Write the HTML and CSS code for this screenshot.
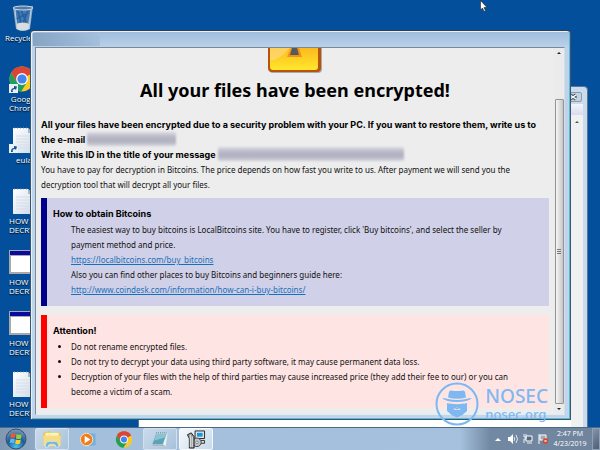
FILE: index.html
```
<!DOCTYPE html>
<html lang="en">
<head>
    <meta charset="UTF-8">
    <meta name="viewport" content="width=device-width, initial-scale=1.0">
    <title>Desktop</title>
    <link rel="stylesheet" href="styles.css">
</head>
<body>
    <!-- shared icons -->
    <svg class="defs" width="0" height="0" aria-hidden="true">
        <defs>
            <linearGradient id="paper" x1="0" y1="0" x2="1" y2="1">
                <stop offset="0" stop-color="#ffffff"/>
                <stop offset="1" stop-color="#cfdbe8"/>
            </linearGradient>
            <symbol id="chrome" viewBox="0 0 48 48">
                <circle cx="24" cy="24" r="23" fill="#fbc926"/>
                <path d="M24 24 4 12.5A23 23 0 0 1 44 12.500Z" fill="#dc4437"/>
                <path d="M24 13h19.500a23 23 0 0 0-39.500-.5L14.500 30Z" fill="#dc4437"/>
                <path d="M4 12.500a23 23 0 0 0 18.500 34.400L33 30 24 34.500 14.500 29.500Z" fill="#1fa05c"/>
                <circle cx="24" cy="24" r="11" fill="#f4f6f8"/>
                <circle cx="24" cy="24" r="8.500" fill="#4285f0"/>
            </symbol>
            <symbol id="doc" viewBox="0 0 20 26">
                <path d="M0 1h15l5 5v20H0Z" fill="url(#paper)"/>
                <path d="M15 1v5h5Z" fill="#a9b8c6"/>
                <path d="M1 1h13" stroke="#7f93a8" stroke-dasharray="1 2"/>
                <path d="M3 9h14M3 12h14M3 15h14M3 18h14M3 21h14" stroke="#d5dee8"/>
            </symbol>
            <symbol id="app" viewBox="0 0 28 24">
                <path d="M0 0h28v24H0Z" fill="#a9a9a9"/>
                <path d="M1 1h26v4H1Z" fill="#0a0aa0"/>
                <path d="M2 6h24v16H2Z" fill="#fff"/>
            </symbol>
            <symbol id="shortcut" viewBox="0 0 9 9">
                <path d="M0 0h9v9H0Z" fill="#e9f1f8"/>
                <path d="M2 8C2 5 3 4 5 4V2l3 .5L7 6 6 5C4 5 3 6 4 8Z" fill="#17508f"/>
            </symbol>
        </defs>
    </svg>

    <main class="desktop">
        <ul class="icons">
            <li class="shortcut">
                <svg class="pic" viewBox="0 0 26 27">
                    <path d="M4 2 24 1 21 24Q14 28 7 24Z" fill="#8fabc8"/>
                    <path d="M6 4 22 4 19 18H8Z" fill="#4779ad"/>
                    <path d="M9 6l3 12M19 6l-5 12M7 14l10-5M12 5l5 12" stroke="#2160a5" stroke-width="1.500"/>
                    <path d="M8 19Q13 16 20 19L20 24Q13 27 8 24Z" fill="#d8dde0"/>
                    <path d="M6 4 8 24M22 4 20 24" stroke="#b9cde0" fill="none"/>
                    <ellipse cx="14" cy="3" rx="10" ry="2" fill="#527ba8" stroke="#cbd8e4"/>
                </svg>
                <span class="label">Recycle Bin</span>
            </li>
            <li class="shortcut">
                <svg class="pic" viewBox="0 0 26 27"><use href="#chrome" width="26" height="26"/><use href="#shortcut" y="18" width="9" height="9"/></svg>
                <span class="label">Google Chrome</span>
            </li>
            <li class="shortcut">
                <svg class="pic" viewBox="0 0 26 27"><use href="#doc" x="4" width="20" height="26"/><use href="#shortcut" y="17" width="9" height="9"/></svg>
                <span class="label">eula</span>
            </li>
            <li class="shortcut">
                <svg class="pic" viewBox="0 0 26 27"><use href="#doc" x="4" width="20" height="26"/></svg>
                <span class="label">HOW TO DECRYPT</span>
            </li>
            <li class="shortcut">
                <svg class="pic" viewBox="0 0 26 27"><use href="#app" y="1" width="28" height="24"/></svg>
                <span class="label">HOW TO DECRYPT</span>
            </li>
            <li class="shortcut">
                <svg class="pic" viewBox="0 0 26 27"><use href="#app" y="1" width="28" height="24"/></svg>
                <span class="label">HOW TO DECRYPT</span>
            </li>
            <li class="shortcut">
                <svg class="pic" viewBox="0 0 26 27"><use href="#doc" x="4" width="20" height="26"/></svg>
                <span class="label">HOW TO DECRYPT</span>
            </li>
        </ul>

        <section class="window window-back">
            <div class="back-title"><button class="close" aria-label="Close"><svg viewBox="0 0 10 8"><path d="M2 2l6 4M8 2 2 6" stroke="#4f5a66" stroke-width="3.500"/><path d="M2 2l6 4M8 2 2 6" stroke="#fff" stroke-width="1.500"/></svg></button></div>
            <div class="back-menu"></div>
            <div class="back-body">
                <div class="scrollbar scrollbar-back"><svg class="arrow" viewBox="0 0 6 4"><path d="M1 3 3 1l2 2Z" fill="#555"/></svg></div>
            </div>
        </section>

        <section class="window window-front">
            <div class="titlebar"><span class="hidden-title"></span></div>
            <div class="viewport">
                <div class="page">
                    <svg class="warning" viewBox="0 0 56 26">
                        <defs>
                            <linearGradient id="gold" x1="0" y1="0" x2="0" y2="1">
                                <stop offset="0" stop-color="#fbad1d"/>
                                <stop offset="1" stop-color="#ffe72c"/>
                            </linearGradient>
                        </defs>
                        <path d="M2-6h53v27q0 4-4 4H6q-4 0-4-4Z" fill="#aaa"/>
                        <path d="M1-6h53v26q0 4-4 4H5q-4 0-4-4Z" fill="#b9530c"/>
                        <path d="M3-6h48v25q0 3-3 3H6q-3 0-3-3Z" fill="url(#gold)"/>
                        <path d="M3-6h23Q18 10 3 13Z" fill="#ffd879" opacity=".7"/>
                        <path d="M24 0h8l3 9H20Z" fill="#f09113"/>
                        <path d="M25 0h5l2 7h-9Z" fill="#555a60"/>
                    </svg>
                    <h1>All your files have been encrypted!</h1>
                    <div class="intro">
                        <p class="strong">All your files have been encrypted due to a security problem with your PC. If you want to restore them, write us to the e-mail <span class="redacted redacted-mail"></span></p>
                        <p class="strong">Write this ID in the title of your message <span class="redacted redacted-id"></span></p>
                        <p class="terms">You have to pay for decryption in Bitcoins. The price depends on how fast you write to us. After payment we will send you the decryption tool that will decrypt all your files.</p>
                    </div>
                    <div class="note note-info">
                        <h2>How to obtain Bitcoins</h2>
                        <div class="note-text">
                            <p>The easiest way to buy bitcoins is LocalBitcoins site. You have to register, click 'Buy bitcoins', and select the seller by payment method and price.</p>
                            <p><a href="https://localbitcoins.com/buy_bitcoins">https://localbitcoins.com/buy_bitcoins</a></p>
                            <p>Also you can find other places to buy Bitcoins and beginners guide here:</p>
                            <p><a href="http://www.coindesk.com/information/how-can-i-buy-bitcoins/">http://www.coindesk.com/information/how-can-i-buy-bitcoins/</a></p>
                        </div>
                    </div>
                    <div class="note note-alert">
                        <h2>Attention!</h2>
                        <ul class="note-text">
                            <li>Do not rename encrypted files.</li>
                            <li>Do not try to decrypt your data using third party software, it may cause permanent data loss.</li>
                            <li>Decryption of your files with the help of third parties may cause increased price (they add their fee to our) or you can become a victim of a scam.</li>
                        </ul>
                    </div>
                </div>
                <div class="scrollbar">
                    <svg class="arrow" viewBox="0 0 6 4"><path d="M1 3 3 1l2 2Z" fill="#222"/></svg>
                    <div class="thumb"></div>
                    <svg class="arrow" viewBox="0 0 6 4"><path d="M1 1 3 3l2-2Z" fill="#222"/></svg>
                </div>
            </div>
        </section>

        <svg class="cursor" viewBox="0 0 8 12"><path d="M.5.5v9.500l2-2 1.500 3.500 1.500-.7L4 7.500h3Z" fill="#fff" stroke="#222" stroke-width=".6"/></svg>
    </main>

    <footer class="taskbar">
        <button class="start" aria-label="Start">
            <svg viewBox="0 0 22 22">
                <defs>
                    <radialGradient id="orb" cx=".5" cy=".9" r=".9">
                        <stop offset="0" stop-color="#45c3ee"/>
                        <stop offset=".5" stop-color="#1d5d99"/>
                        <stop offset="1" stop-color="#7d9cb9"/>
                    </radialGradient>
                </defs>
                <circle cx="11" cy="11" r="10" fill="url(#orb)" stroke="#34516f"/>
                <path d="M6 6q2-1.500 4.500-.3L10 10q-2-1-4.500 0Z" fill="#f0592a"/>
                <path d="M11.500 6q2 1.300 5 .2L16 10.500q-2.500 1-5 0Z" fill="#9ccc3c"/>
                <path d="M5.300 11q2-1 4.500 0l-.6 4.300q-2-1.200-4.500-.2Z" fill="#5cb7ef"/>
                <path d="M10.800 11.500q2.500 1 5 0L15 15.500q-2.500 1.300-4.800 0Z" fill="#fdcb34"/>
            </svg>
        </button>
        <button class="task task-open" aria-label="Explorer">
            <svg viewBox="0 0 22 20">
                <path d="M2 3l6-2 2 2h10v14H2Z" fill="#e9c65a"/>
                <path d="M4 3h14v12H4Z" fill="#fff3b3"/>
                <path d="M2 6h18v11H2Z" fill="#f6dc82"/>
                <path d="M4 18q0-6 4-6h6q4 0 4 6h-3q0-3-2-3H9q-2 0-2 3Z" fill="#73b7df" stroke="#d8effa" stroke-width=".7"/>
            </svg>
        </button>
        <button class="task" aria-label="Media Player">
            <svg viewBox="0 0 22 20">
                <path d="M8 3l9 1v13l-9 1Z" fill="#9fd0ef"/>
                <path d="M12 3l7 1v12l-7 1Z" fill="#75b0df"/>
                <circle cx="9.500" cy="10" r="6.500" fill="#f07c1c" stroke="#fbe0c0"/>
                <path d="M7.500 6v8l6-4Z" fill="#fff"/>
            </svg>
        </button>
        <button class="task" aria-label="Chrome"><svg viewBox="0 0 20 20"><use href="#chrome" x="1" y="1" width="18" height="18"/></svg></button>
        <button class="task task-open" aria-label="Notepad">
            <svg viewBox="0 0 22 20">
                <path d="M8 3h11l-2 14H4Z" fill="#e9f1f5"/>
                <path d="M7 4h11l-4 11H3Z" fill="#5da3b8"/>
                <path d="M7 4h11l-1.500 4L5 11Z" fill="#8bc4d1"/>
                <path d="M7 3h12" stroke="#566d7b" stroke-dasharray="1 1"/>
                <path d="M3 15h11l3 2H4Z" fill="#a9b6bf"/>
            </svg>
        </button>
        <button class="task task-active" aria-label="Installer">
            <svg viewBox="0 0 22 20">
                <path d="M10 1h10v8H10Z" fill="#dfe3e6" stroke="#222"/>
                <path d="M12 3h6v4h-6Z" fill="#1598e0"/>
                <path d="M12 11h8v3h-8Z" fill="#d5d5d5" stroke="#333"/>
                <circle cx="12" cy="13" r="4.500" fill="#bcc5c9" stroke="#444"/>
                <circle cx="12" cy="13" r="1.300" fill="#fff" stroke="#444" stroke-width=".6"/>
                <path d="M2 5l4-2 3 4v12H4V9Z" fill="#8e9898" stroke="#222"/>
                <path d="M5 5v13M7 7v11" stroke="#eee"/>
            </svg>
        </button>
        <div class="tray">
            <svg class="arrow" viewBox="0 0 6 4"><path d="M0 4 3 1l3 3Z" fill="#fff"/></svg>
            <svg class="tray-icon" viewBox="0 0 10 10"><path d="M0 3h2l3-3v10L2 7H0Z" fill="#fff"/><path d="M6 3q1.500 2 0 4M8 1q3 4 0 8" fill="none" stroke="#fff" stroke-width=".8"/></svg>
            <svg class="tray-icon" viewBox="0 0 10 10"><path d="M3 2h6v5H3Z" fill="#556a80" stroke="#fff"/><path d="M4 9h5M1 0v3M3 0v3M1 3h2v2H1v4" fill="none" stroke="#e8eef4"/></svg>
            <svg class="tray-icon" viewBox="0 0 10 10"><path d="M1 0v10M2 1h6v5H2Z" fill="#9caab7" stroke="#fff"/><circle cx="7.500" cy="7" r="2.800" fill="#d9462e"/><path d="M6.500 6l2 2M8.500 6l-2 2" stroke="#fff" stroke-width=".8"/></svg>
        </div>
        <div class="clock"><span>2:47 PM</span><span>4/23/2019</span></div>
        <button class="show-desktop" aria-label="Show desktop"></button>
    </footer>

    <div class="watermark">
        <svg class="watermark-logo" viewBox="0 0 44 44">
            <circle cx="22" cy="22" r="20.500" fill="none" stroke="#7db8f2" stroke-width="2"/>
            <path d="M13 15.500 14 10q.3-1.500 2-1.500 6 1 12 0 1.700 0 2 1.500l1 5.500q-9 2.500-18 0Z" fill="#7db8f2"/>
            <path d="M7 16q3 0 6 1 9 2 18 0 3-1 6-1-4 4-15 4T7 16Z" fill="#7db8f2"/>
            <path d="M12 21l3 .7q0 2.500 2.500 2.800 2.500-.5 4.500 1 2-1.500 4.500-1 2.500-.3 2.500-2.800l3-.7v8q-4 4.500-10 6.500-6-2-10-6.500Z" fill="#7db8f2"/>
            <path d="M15 21.500q7 1.500 14 0v3.500H15Z" fill="#7db8f2"/>
            <path d="M18 27q2-1 4 .5 2-1.500 4-.5-2 1.500-4 .8-2 .7-4-.8Z" fill="#fbdfe2"/>
        </svg>
        <div class="watermark-text"><span class="brand">NOSEC</span><span class="site">nosec.org</span></div>
    </div>
</body>
</html>
```
FILE: styles.css
```
* {
    box-sizing: border-box;
}

body {
    margin: 0;
    height: 100vh;
    display: flex;
    flex-direction: column;
    overflow: hidden;
    position: relative;
    background: #034f9b;
    font-family: "Noto Sans", sans-serif;
    font-size: 8px;
    color: #111111;
}

h1, h2, p, ul {
    margin: 0;
    padding: 0;
}

button {
    border: none;
    padding: 0;
    background: none;
}

svg {
    display: block;
}

.defs {
    position: absolute;
}

/* Desktop */
.desktop {
    flex: 1;
    min-height: 0;
    position: relative;
    overflow: hidden;
}

.icons {
    list-style: none;
    width: 50px;
    padding-top: 5px;
}

.shortcut {
    height: 61px;
    padding-left: 9px;
}

.pic {
    width: 26px;
    height: 27px;
}

.label {
    display: block;
    width: 36px;
    margin-top: 1px;
    font-family: "Open Sans", sans-serif;
    font-size: 8px;
    line-height: 9px;
    color: #ffffff;
    text-shadow: 0 1px 1px #000000;
}

.shortcut:nth-child(1) .label {
    width: 48px;
    margin-left: -4px;
}

.shortcut:nth-child(-n+3):not(:first-child) .label {
    width: 30px;
    text-align: center;
}

/* Windows */
.window {
    position: absolute;
    display: flex;
    flex-direction: column;
}

.window-back {
    left: 138px;
    right: 12px;
    top: 86px;
    bottom: -10px;
    padding: 0 4px 0 0;
    background: #c9dcee;
    border: 1px solid #5b7691;
    border-radius: 4px;
}

.back-title {
    height: 17px;
    padding: 5px 1px 0;
    display: flex;
    justify-content: flex-end;
}

.close {
    width: 18px;
    height: 10px;
    border: 1px solid #8a9cae;
    border-radius: 2px;
    background: #c4d2e0;
}

.close svg {
    width: 10px;
    height: 8px;
    margin: 0 auto;
}

.back-menu {
    height: 11px;
    background: linear-gradient(#f4f5fb, #d6dbee);
}

.back-body {
    flex: 1;
    background: #ffffff;
    display: flex;
    justify-content: flex-end;
}

.window-front {
    left: 30px;
    right: 29px;
    top: 30px;
    bottom: 7px;
    padding: 0 5px 4px 4px;
    background: linear-gradient(#9dbbdc, #bcd3ea 17px, #bfd6ec);
    border: 1px solid #39566f;
    border-top-color: #333f4a;
    border-radius: 4px 4px 0 0;
    box-shadow: inset 1px 1px #e6f0f8, inset -1px -1px #5fb8d4;
}

.titlebar {
    height: 16px;
    flex: none;
    padding-top: 2px;
}

.hidden-title {
    display: block;
    width: 67px;
    height: 13px;
    margin-left: -2px;
    background: linear-gradient(90deg, #87a4c5, #98b4d3 60%, #a5c0dd);
}

.viewport {
    flex: 1;
    min-height: 0;
    display: flex;
    background: #ededed;
    border: 1px solid #7b8a98;
    border-right-color: #d5dde5;
    border-bottom-color: #e5ebf0;
    overflow: hidden;
}

.page {
    flex: 1;
    min-width: 0;
    padding: 0 5px;
    line-height: 15px;
    overflow: hidden;
}

.warning {
    width: 56px;
    height: 26px;
    margin: 0 auto;
}

h1 {
    margin-top: 4px;
    font-size: 18px;
    line-height: 24px;
    text-align: center;
    color: #000000;
}

.intro {
    margin-top: 15px;
}

.strong {
    font-family: Inter, sans-serif;
    font-size: 9px;
    font-weight: bold;
    color: #000000;
}

.terms {
    padding-right: 20px;
}

.redacted {
    display: inline-block;
    height: 14px;
    vertical-align: top;
    border-radius: 2px;
    filter: blur(1px);
    background: linear-gradient(#d9d9e1, #b5b5c5 40%, #b0b0c0 65%, #d3d3dd);
}

.redacted-mail {
    width: 89px;
}

.redacted-id {
    width: 186px;
}

.note {
    border-left: 6px solid;
    padding: 7px 20px 9px 6px;
}

.note h2 {
    font-family: Inter, sans-serif;
    font-size: 9px;
    line-height: 17px;
    color: #000000;
}

.note-text {
    padding-left: 18px;
}

.note-info {
    margin-top: 6px;
    border-color: #00008b;
    background: #d0d0e8;
}

.note-alert {
    margin-top: 9px;
    border-color: #ff0000;
    background: #ffe4e4;
}

.note a {
    color: #1a70b8;
}

.scrollbar {
    flex: none;
    width: 10px;
    display: flex;
    flex-direction: column;
    align-items: center;
    padding: 3px 0;
    background: #ebebeb;
}

.scrollbar-back {
    width: 12px;
    padding-top: 5px;
    background: #f0f0f0;
}

.arrow {
    width: 6px;
    height: 4px;
    flex: none;
}

.thumb {
    flex: 1;
    width: 9px;
    margin: 44px 0 3px;
    border: 1px solid #959595;
    border-radius: 1px;
    background: repeating-linear-gradient(#777777 0 1px, transparent 1px 2px) center / 4px 5px no-repeat, linear-gradient(90deg, #f5f5f5, #dedede 50%, #c6c6ca);
}

.cursor {
    position: absolute;
    left: 480px;
    top: 0;
    width: 8px;
    height: 12px;
}

/* Taskbar */
.taskbar {
    flex: none;
    height: 23px;
    display: flex;
    align-items: center;
    gap: 2px;
    border-top: 1px solid #4e6984;
    background: linear-gradient(90deg, #8098b2, #8ea8c5 34px, #a3bfdc 70px, #a5c1de 460px, #7289a3 490px, #70849c);
}

.start {
    width: 33px;
    padding-left: 5px;
}

.start svg {
    width: 22px;
    height: 22px;
}

.task {
    width: 34px;
    height: 22px;
    display: flex;
    align-items: center;
    justify-content: center;
    border: 1px solid transparent;
    border-radius: 2px;
}

.task svg {
    width: 22px;
    height: 19px;
}

.task-open {
    border-color: #d3e1ee;
    background: linear-gradient(135deg, #c9dbec, #a8c1db);
}

.task-active {
    border-color: #f4f8fc;
    background: linear-gradient(135deg, #f6f9fc, #c5d8ea);
}

.tray {
    margin-left: auto;
    display: flex;
    align-items: center;
    gap: 5px;
}

.tray .arrow {
    margin-right: 2px;
}

.tray-icon {
    width: 10px;
    height: 10px;
}

.clock {
    width: 40px;
    display: flex;
    flex-direction: column;
    align-items: center;
    font-family: "Open Sans", sans-serif;
    font-size: 7px;
    line-height: 10px;
    color: #ffffff;
}

.show-desktop {
    width: 8px;
    height: 22px;
    border: 1px solid #8fa1b5;
    background: linear-gradient(135deg, #8494a8, #4c5f76);
}

/* Watermark */
.watermark {
    position: absolute;
    right: 52px;
    bottom: 24px;
    display: flex;
    align-items: center;
    gap: 6px;
    color: #7db8f2;
    font-family: "Noto Sans", sans-serif;
    font-weight: 500;
}

.watermark-logo {
    width: 44px;
    height: 44px;
}

.watermark-text {
    display: flex;
    flex-direction: column;
}

.brand {
    font-size: 19px;
    line-height: 20px;
}

.site {
    font-size: 13px;
    line-height: 16px;
}
```
